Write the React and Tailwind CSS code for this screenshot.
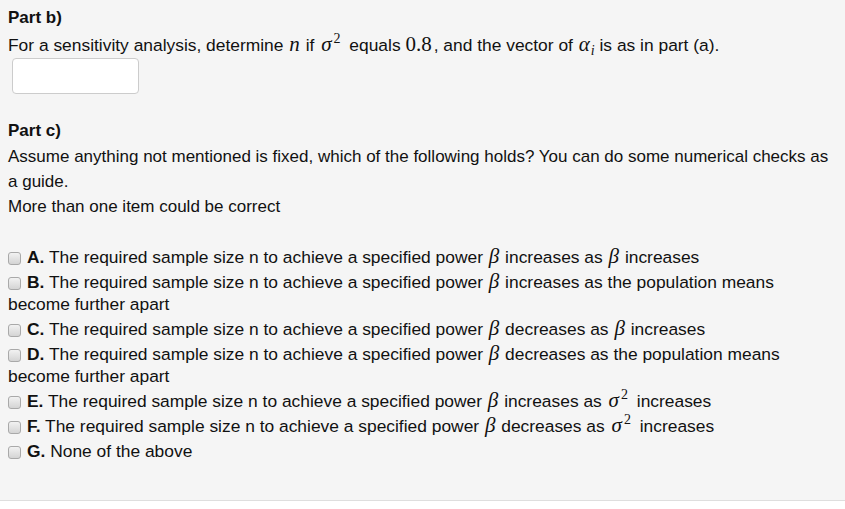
import React from "react";

const SERIF = { fontFamily: '"Liberation Serif", "DejaVu Serif", serif' };
const M = ({ children, cls = "" }) => (
  <span className={"italic text-[21px] leading-none " + cls} style={SERIF}>{children}</span>
);
const R = ({ children, cls = "" }) => (
  <span className={"text-[21px] leading-none " + cls} style={SERIF}>{children}</span>
);
const Sig2 = () => (
  <span className="whitespace-nowrap leading-none ml-[2px] mr-[4px]" style={SERIF}>
    <span className="italic text-[21px]">σ</span>
    <span className="text-[14px] relative top-[-8px] ml-[2px]">2</span>
  </span>
);
const Beta = () => (
  <span className="italic text-[21px] leading-none mx-[1px]" style={SERIF}>β</span>
);

const Box = () => (
  <span className="inline-block align-[-2px] w-[13px] h-[13px] rounded-[3px] border border-[#a9a9a9] bg-gradient-to-b from-[#f2f2f2] to-[#d4d4d4] mr-[6px]" />
);

const Opt = ({ letter, children }) => (
  <div className="leading-[22px] py-[1.5px] text-[17.4px]">
    <Box />
    <b>{letter}</b> {children}
  </div>
);

export default function App() {
  return (
    <div className="w-[845px] h-[509px] bg-white" style={{ fontFamily: '"Liberation Sans", Arial, sans-serif' }}>
      <div className="h-[501px] bg-[#f5f5f5] border-b border-[#dedede] px-[8px] pt-[5px] text-[17px] text-[#111]">
        <div className="leading-[25px] font-bold">Part b)</div>
        <div className="leading-[25px] pt-[3px] text-[17.4px]">
          For a sensitivity analysis, determine <M cls="mx-[1px]">n</M> if <Sig2 /> equals <R cls="mr-[2px]">0.8</R>, and the vector of{" "}
          <M cls="ml-[1px]">α<span className="text-[14px] relative top-[4px] ml-[1px]">i</span></M> is as in part (a).
        </div>
        <div className="ml-[4px] w-[127px] h-[36px] bg-white border border-[#cccccc] rounded-[4px]" />
        <div className="h-[24px]" />
        <div className="leading-[25px] font-bold">Part c)</div>
        <div className="leading-[25px] mt-[1px]">
          Assume anything not mentioned is fixed, which of the following holds? You can do some numerical checks as a guide.
          <br />
          More than one item could be correct
        </div>
        <div className="h-[25px]" />
        <Opt letter="A.">The required sample size n to achieve a specified power <Beta /> increases as <Beta /> increases</Opt>
        <Opt letter="B.">The required sample size n to achieve a specified power <Beta /> increases as the population means become further apart</Opt>
        <Opt letter="C.">The required sample size n to achieve a specified power <Beta /> decreases as <Beta /> increases</Opt>
        <Opt letter="D.">The required sample size n to achieve a specified power <Beta /> decreases as the population means become further apart</Opt>
        <Opt letter="E.">The required sample size n to achieve a specified power <Beta /> increases as <Sig2 /> increases</Opt>
        <Opt letter="F.">The required sample size n to achieve a specified power <Beta /> decreases as <Sig2 /> increases</Opt>
        <Opt letter="G.">None of the above</Opt>
      </div>
    </div>
  );
}
